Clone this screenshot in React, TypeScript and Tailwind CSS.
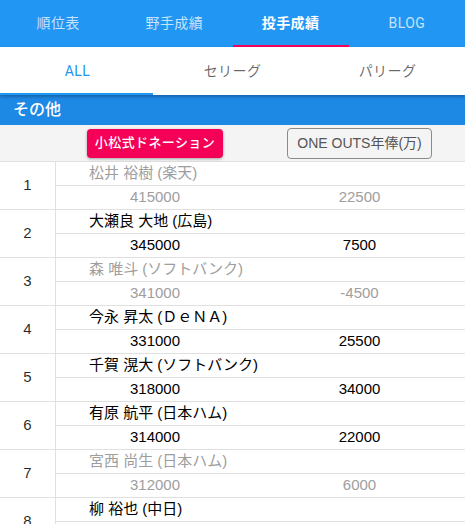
import React from 'react';

type Row = { rank: number; name: string; a: string; b: string; dim: boolean };

const rows: Row[] = [
  { rank: 1, name: '松井 裕樹 (楽天)', a: '415000', b: '22500', dim: true },
  { rank: 2, name: '大瀬良 大地 (広島)', a: '345000', b: '7500', dim: false },
  { rank: 3, name: '森 唯斗 (ソフトバンク)', a: '341000', b: '-4500', dim: true },
  { rank: 4, name: '今永 昇太 (ＤｅＮＡ)', a: '331000', b: '25500', dim: false },
  { rank: 5, name: '千賀 滉大 (ソフトバンク)', a: '318000', b: '34000', dim: false },
  { rank: 6, name: '有原 航平 (日本ハム)', a: '314000', b: '22000', dim: false },
  { rank: 7, name: '宮西 尚生 (日本ハム)', a: '312000', b: '6000', dim: true },
  { rank: 8, name: '柳 裕也 (中日)', a: '305000', b: '12000', dim: false },
];

const App: React.FC = () => {
  return (
    <div className="min-h-screen bg-white font-['Roboto','Noto_Sans_CJK_JP',sans-serif]">
      {/* top nav */}
      <div className="grid grid-cols-4 h-[47px] bg-[#2196f3] text-[14px] tracking-[0.4px]">
        <div className="flex items-center justify-center text-white/75">順位表</div>
        <div className="flex items-center justify-center text-white/75">野手成績</div>
        <div className="relative flex items-center justify-center text-white font-bold">
          投手成績
          <span className="absolute left-0 right-0 bottom-0 h-[2px] bg-[#f50057]" />
        </div>
        <div className="flex items-center justify-center text-white/75">BLOG</div>
      </div>

      {/* league tabs */}
      <div className="relative z-10 grid grid-cols-3 h-[48px] bg-white text-[14px] tracking-[0.4px] shadow-[0_2px_3px_rgba(0,0,0,0.25)]">
        <div className="relative flex items-center justify-center text-[#2196f3]">
          ALL
          <span className="absolute left-0 right-[2px] bottom-0 h-[2px] bg-[#2196f3]" />
        </div>
        <div className="flex items-center justify-center text-black/60">セリーグ</div>
        <div className="flex items-center justify-center text-black/60">パリーグ</div>
      </div>

      {/* section header */}
      <div className="h-[30px] bg-[#1e88e5] px-[13px] flex items-center text-white text-[16px] font-medium">
        その他
      </div>

      {/* button row */}
      <div className="grid grid-cols-[56px_198px_1fr] h-[37px] bg-[#f4f4f4] border-b border-[#e0e0e0] items-center">
        <div />
        <div className="flex justify-center">
          <button className="h-[29px] px-[8px] rounded-[4px] bg-[#f50057] text-white text-[13px] font-medium tracking-[0.4px] shadow-[0_1px_3px_rgba(0,0,0,0.35)]">
            小松式ドネーション
          </button>
        </div>
        <div className="flex justify-center">
          <button className="h-[31px] px-[9px] rounded-[4px] border border-[#8a8a8a] text-[#555] text-[14px] font-['Liberation_Sans','Noto_Sans_CJK_JP',sans-serif]">
            ONE OUTS年俸(万)
          </button>
        </div>
      </div>

      {/* ranking */}
      {rows.map((r) => (
        <div
          key={r.rank}
          className="grid grid-cols-[56px_1fr] border-b border-[#e0e0e0] text-[15px] font-['Liberation_Sans','Noto_Sans_CJK_JP',sans-serif]"
        >
          <div className="flex items-center justify-center border-r border-[#e0e0e0] text-black/85">
            {r.rank}
          </div>
          <div className={r.dim ? 'text-[#9e9e9e]' : 'text-black'}>
            <div className="h-[24px] flex items-center pl-[33px] border-b border-[#e0e0e0]">{r.name}</div>
            <div className="h-[23px] grid grid-cols-[198px_1fr] items-center">
              <span className="text-center">{r.a}</span>
              <span className="text-center">{r.b}</span>
            </div>
          </div>
        </div>
      ))}
    </div>
  );
};

export default App;
